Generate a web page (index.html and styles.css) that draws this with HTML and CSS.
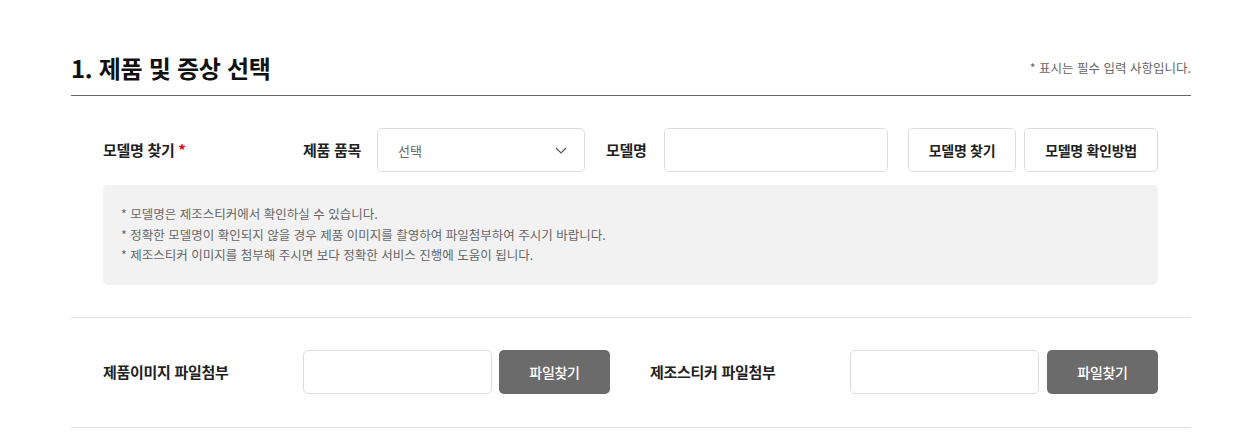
FILE: index.html
```html
<!DOCTYPE html>
<html lang="ko">
<head>
<meta charset="utf-8">
<title>제품 및 증상 선택</title>
<link rel="stylesheet" href="styles.css">
</head>
<body>
<div class="wrap">
  <div class="head">
    <h2 class="title">1. 제품 및 증상 선택</h2>
    <p class="note">* 표시는 필수 입력 사항입니다.</p>
  </div>

  <div class="row row-model">
    <div class="fields">
      <div class="label main-label">모델명 찾기 <span class="req">*</span></div>
      <div class="label sub-label cat-label">제품 품목</div>
      <div class="select">
        <span>선택</span>
        <svg class="chev" width="12" height="7" viewBox="0 0 12 7"><path d="M1 1l5 5 5-5" fill="none" stroke="#555" stroke-width="1.2"/></svg>
      </div>
      <div class="label sub-label model-label">모델명</div>
      <div class="input model-input"></div>
      <button class="btn btn-line btn-find">모델명 찾기</button>
      <button class="btn btn-line btn-how">모델명 확인방법</button>
    </div>
    <div class="info">
      <p>* 모델명은 제조스티커에서 확인하실 수 있습니다.</p>
      <p>* 정확한 모델명이 확인되지 않을 경우 제품 이미지를 촬영하여 파일첨부하여 주시기 바랍니다.</p>
      <p>* 제조스티커 이미지를 첨부해 주시면 보다 정확한 서비스 진행에 도움이 됩니다.</p>
    </div>
  </div>

  <div class="row row-file">
    <div class="file-group">
      <div class="label main-label">제품이미지 파일첨부</div>
      <div class="input file-input"></div>
      <button class="btn btn-dark">파일찾기</button>
    </div>
    <div class="file-group">
      <div class="label main-label">제조스티커 파일첨부</div>
      <div class="input file-input"></div>
      <button class="btn btn-dark">파일찾기</button>
    </div>
  </div>
</div>
</body>
</html>
```

FILE: styles.css
```css
* { box-sizing: border-box; }
body {
  margin: 0;
  background: #fff;
  font-family: "Noto Sans CJK KR", "Noto Sans", sans-serif;
  color: #222;
}
.wrap {
  width: 1120px;
  margin-left: 71px;
  padding-top: 50px;
}
.head {
  display: flex;
  justify-content: space-between;
  align-items: center;
  padding-bottom: 9px;
  border-bottom: 1px solid #666;
}
.title {
  margin: 0;
  font-size: 24px;
  line-height: 36px;
  font-weight: 700;
  color: #111;
  letter-spacing: -0.3px;
}
.note {
  margin: 0;
  font-size: 12.5px;
  line-height: 18px;
  color: #666;
}
.row {
  padding: 32px 33px 33px 32px;
  border-bottom: 1px solid #e1e1e1;
}
.row-model { padding-bottom: 32px; }
.fields {
  display: flex;
  align-items: center;
  height: 44px;
}
.label {
  font-size: 15px;
  font-weight: 700;
  line-height: 20px;
  color: #222;
  letter-spacing: -0.3px;
}
.main-label { width: 200px; flex: none; }
.req { color: #e60012; }
.cat-label { width: 74px; flex: none; }
.model-label { width: 58px; flex: none; margin-left: 21px; }
.select {
  width: 208px;
  height: 44px;
  border: 1px solid #dcdcdc;
  border-radius: 5px;
  display: flex;
  align-items: center;
  justify-content: space-between;
  padding: 0 17px 0 20px;
  font-size: 13px;
  color: #666;
}
.input {
  height: 44px;
  border: 1px solid #dcdcdc;
  border-radius: 5px;
  background: #fff;
}
.model-input { width: 224px; }
.btn {
  height: 44px;
  border-radius: 5px;
  font-family: inherit;
  font-size: 14px;
  font-weight: 700;
  letter-spacing: -0.3px;
  cursor: pointer;
}
.btn-line {
  background: #fff;
  border: 1px solid #dcdcdc;
  color: #222;
}
.btn-find { width: 108px; margin-left: 20px; }
.btn-how { width: 134px; margin-left: 8px; }
.info {
  margin-top: 13px;
  background: #f2f2f2;
  border-radius: 5px;
  padding: 19px 20px 19px 18px;
}
.info p {
  margin: 0;
  font-size: 12.5px;
  line-height: 20.5px;
  color: #666;
}
.row-file {
  display: grid;
  grid-template-columns: 507px 508px;
  column-gap: 40px;
}
.file-group {
  display: flex;
  align-items: center;
  height: 44px;
}
.file-input { width: 189px; flex: none; }
.btn-dark {
  width: 111px;
  flex: none;
  margin-left: auto;
  border: none;
  background: #6b6b6b;
  color: #fff;
  font-weight: 500;
}
```
